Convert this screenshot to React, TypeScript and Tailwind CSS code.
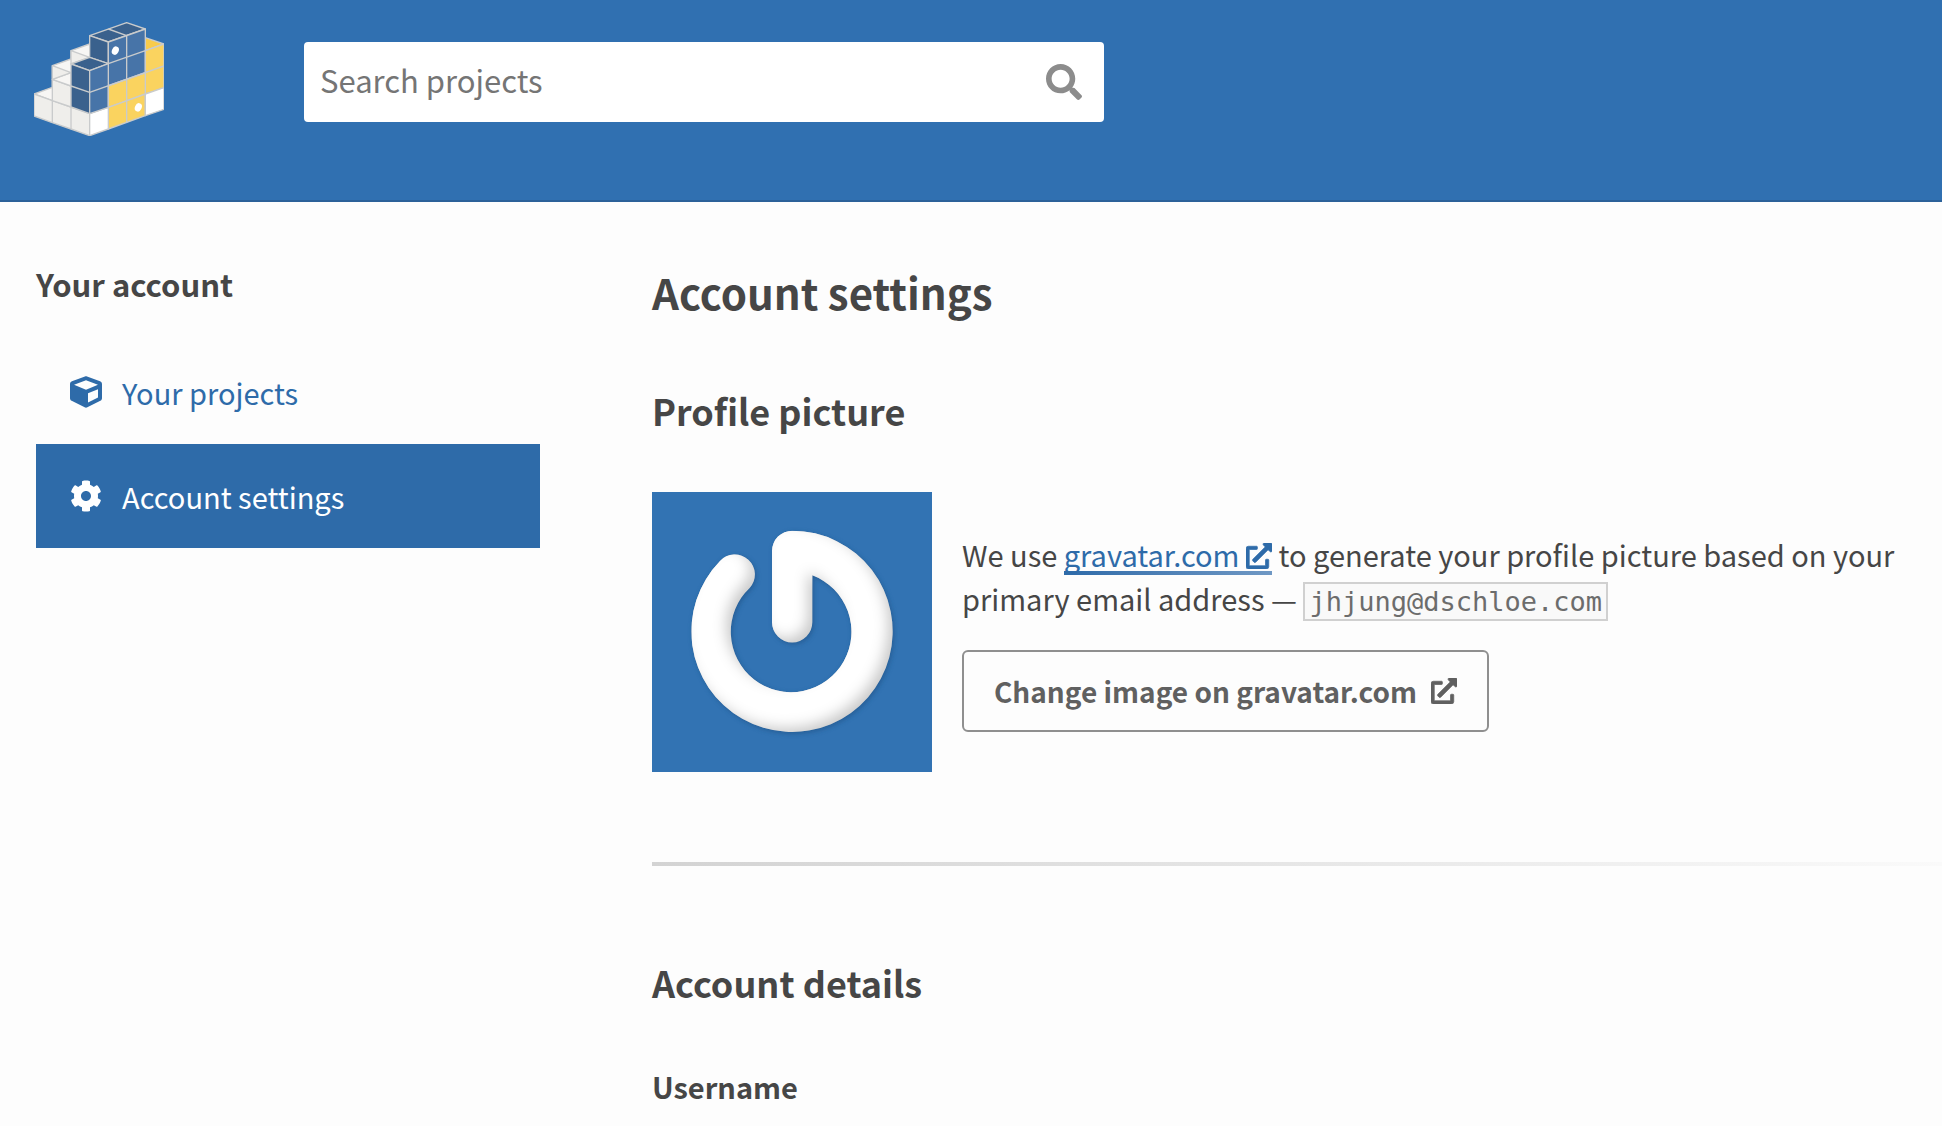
import { FaSearch, FaCube, FaCog, FaExternalLinkAlt } from "react-icons/fa";

function Logo() {
  return (
    <svg viewBox="42 35 390 342" className="w-[130px] h-[114px]" stroke="#c9cbcc" strokeWidth="4" strokeLinejoin="round" aria-hidden="true">
      <path fill="#f7f6f4" d="M42 251 97 231 97 166 153 146 153 121 209 101 209 150 265 160 209 310 153 290 97 271Z" />
      <path fill="#efeeeb" d="M42 251 97 271 153 290 209 310V376L153 356 97 337 42 317Z" />
      <path fill="#efeeeb" d="M97 207 153 227V290L97 271Z" />
      <path fill="#f7f6f4" d="M97 207 153 187V227Z" />
      <path fill="#efeeeb" d="M97 166 153 187 97 207Z" />
      <path fill="#efeeeb" d="M153 121 209 141 153 161Z" />
      <path fill="#f8cb4b" d="M376 82 432 101 376 121Z" />
      <path fill="#fad35f" d="M376 121 432 101V232L265 291V226L376 187Z" />
      <path fill="#fad35f" d="M265 291 376 251V316L265 356Z" />
      <path fill="#fff" d="M209 310 265 291V356L209 376ZM376 251 432 232V297L376 316Z" />
      <path fill="#3a618d" d="M209 76 320 37 376 56 265 95Z" />
      <path fill="#3a618d" d="M209 76 265 95V160L209 141Z" />
      <path fill="#4774a8" d="M265 95 376 56V187L265 226Z" />
      <path fill="#3a618d" d="M153 161 209 141 265 160 209 181Z" />
      <path fill="#3a618d" d="M153 161 209 181V310L153 290Z" />
      <path fill="#4774a8" d="M209 181 265 160V291L209 310Z" />
      <path fill="none" d="M265 56 320 76V337M153 227 209 246 432 167M376 121V251M265 160 376 121M265 226V291M97 271V337M153 290V356" />
      <ellipse cx="286" cy="121" rx="10" ry="13" fill="#fff" stroke="none" transform="rotate(25 286 121)" />
      <ellipse cx="355" cy="291" rx="10" ry="13" fill="#fff" stroke="none" transform="rotate(25 355 291)" />
    </svg>
  );
}

const powerShape =
  "M457 152A302 302 0 1 1 240 243A60 60 0 1 1 329 324A181 181 0 1 0 517 286V427A60 60 0 0 1 396 427V213A61 61 0 0 1 457 152Z";

function Avatar() {
  return (
    <svg viewBox="36 36 840 840" className="size-[280px] shrink-0 bg-[#3273b3]" role="img" aria-label="Profile picture">
      <defs>
        <filter id="soft" x="-20%" y="-20%" width="140%" height="140%">
          <feGaussianBlur stdDeviation="20" />
        </filter>
        <filter id="glow" x="-20%" y="-20%" width="140%" height="140%">
          <feGaussianBlur stdDeviation="8" />
        </filter>
        <clipPath id="power">
          <path d={powerShape} />
        </clipPath>
      </defs>
      <path d={powerShape} fill="#1d4f82" opacity="0.6" filter="url(#glow)" transform="translate(4 5)" />
      <g clipPath="url(#power)">
        <rect x="36" y="36" width="840" height="840" fill="#c8c8c8" />
        <path d={powerShape} fill="#fff" stroke="#fff" strokeWidth="14" filter="url(#soft)" transform="translate(-20 -18)" />
      </g>
    </svg>
  );
}

export default function App() {
  return (
    <div className="min-h-screen overflow-x-hidden bg-[#fdfdfd] font-['Noto_Sans_CJK_SC',sans-serif] text-[29px] leading-[44px] text-[#464646]">
      <header className="flex h-[202px] items-start border-b-2 border-[#2c6199] bg-[#3070b1] pl-[34px]">
        <a href="#home" aria-label="Home" className="mt-[22px] mr-[140px] shrink-0">
          <Logo />
        </a>
        <form role="search" className="mt-[42px] flex h-20 w-full max-w-[800px] items-center rounded bg-white pr-[22px] pl-4">
          <input
            type="search"
            aria-label="Search projects"
            placeholder="Search projects"
            className="min-w-0 flex-1 bg-transparent pb-1 text-[31px] outline-none placeholder:text-[#757575]"
          />
          <button type="button" aria-label="Search" className="text-4xl text-[#8c8c8c]">
            <FaSearch />
          </button>
        </form>
      </header>

      <div className="flex items-start gap-28 pl-9">
        <nav aria-labelledby="nav-title" className="w-[504px] shrink-0 pt-15">
          <h2 id="nav-title" className="text-[31px] font-bold">Your account</h2>
          <ul className="mt-[34px]">
            <li>
              <a href="#projects" className="flex h-[104px] items-center gap-5 px-[34px] text-[#2e6ba9]">
                <FaCube className="size-8" />
                Your projects
              </a>
            </li>
            <li>
              <a href="#settings" aria-current="page" className="flex h-[104px] items-center gap-5 bg-[#2e6ba9] px-[34px] text-white">
                <FaCog className="size-8" />
                Account settings
              </a>
            </li>
          </ul>
        </nav>

        <main className="min-w-0 flex-1 pt-[62px]">
          <h1 className="text-[42px] leading-[56px] font-bold">Account settings</h1>
          <section>
            <h2 className="mt-16 text-4xl leading-[52px] font-bold">Profile picture</h2>
            <div className="mt-14 flex items-center gap-[30px]">
              <Avatar />
              <div className="min-w-0 pr-10">
                <p>
                  We use{" "}
                  <a
                    href="#gravatar"
                    className="bg-linear-to-r from-[#2e6ba9] to-[#6f98c4] bg-[length:100%_4px] bg-bottom bg-no-repeat whitespace-nowrap text-[#2e6ba9]"
                  >
                    gravatar.com <FaExternalLinkAlt className="inline size-[26px] stroke-[14] align-[-2px]" />
                  </a>{" "}
                  to generate your profile picture based on your primary email address —{" "}
                  <code className="border-2 border-[#d0d0d0] bg-[#f9f9f9] px-1 py-0.5 font-['DejaVu_Sans_Mono',monospace] text-[27px] text-[#6c6c6c]">
                    jhjung@dschloe.com
                  </code>
                </p>
                <a href="#change" className="mt-[26px] flex h-[82px] w-fit items-center gap-3.5 rounded-md border-2 border-[#8f8f8f] px-[30px] text-[28px] font-bold text-[#606060]">
                  Change image on gravatar.com
                  <FaExternalLinkAlt className="size-[26px] stroke-[14]" />
                </a>
              </div>
            </div>
          </section>
          <hr className="mt-[90px] h-1 border-0 bg-linear-to-r from-[#d3d3d3] to-[#fafafa]" />
          <section>
            <h2 className="mt-[90px] text-4xl leading-[52px] font-bold">Account details</h2>
            <h3 className="mt-14 font-bold">Username</h3>
          </section>
        </main>
      </div>
    </div>
  );
}
